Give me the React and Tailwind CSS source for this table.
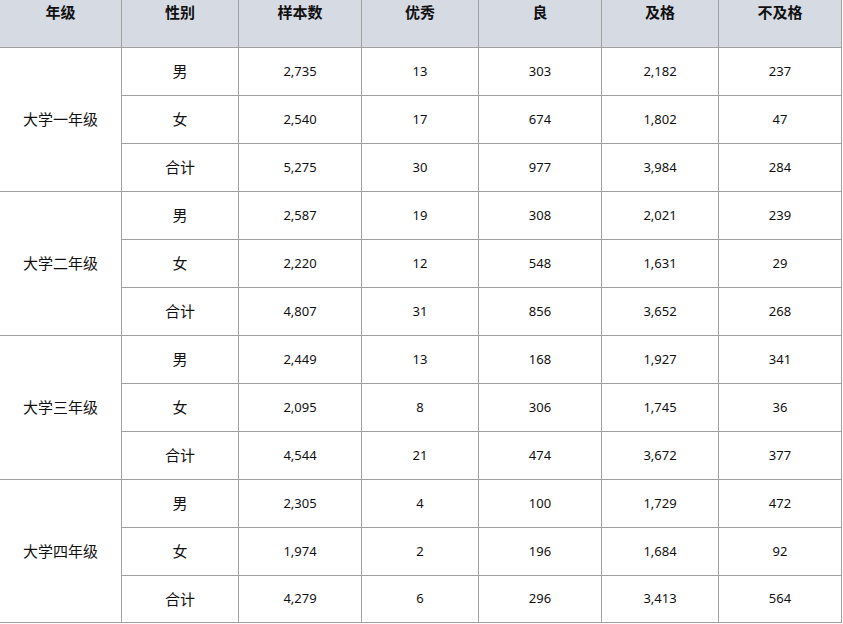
import { Fragment } from 'react';

const grades = [
  {
    name: '大学一年级',
    rows: [
      ['男', '2,735', '13', '303', '2,182', '237'],
      ['女', '2,540', '17', '674', '1,802', '47'],
      ['合计', '5,275', '30', '977', '3,984', '284'],
    ],
  },
  {
    name: '大学二年级',
    rows: [
      ['男', '2,587', '19', '308', '2,021', '239'],
      ['女', '2,220', '12', '548', '1,631', '29'],
      ['合计', '4,807', '31', '856', '3,652', '268'],
    ],
  },
  {
    name: '大学三年级',
    rows: [
      ['男', '2,449', '13', '168', '1,927', '341'],
      ['女', '2,095', '8', '306', '1,745', '36'],
      ['合计', '4,544', '21', '474', '3,672', '377'],
    ],
  },
  {
    name: '大学四年级',
    rows: [
      ['男', '2,305', '4', '100', '1,729', '472'],
      ['女', '1,974', '2', '196', '1,684', '92'],
      ['合计', '4,279', '6', '296', '3,413', '564'],
    ],
  },
];

const headers = ['年级', '性别', '样本数', '优秀', '良', '及格', '不及格'];

const cell = 'flex items-center justify-center border-r border-b border-[#a0a0a0]';

export default function App() {
  return (
    <div
      className="w-[843px] h-[624px] overflow-hidden bg-white text-[#111]"
      style={{ fontFamily: '"Noto Sans", "Noto Sans CJK SC", sans-serif' }}
    >
      <div className="grid w-[842px] grid-cols-[122px_117px_123px_117px_123px_117px_123px] grid-rows-[repeat(12,48px)_47px]">
        {headers.map((h) => (
          <div
            key={h}
            className="flex justify-center items-start pt-[2px] bg-[#d6dae3] border-r border-b border-[#a0a0a0] text-[15px] font-bold leading-[20px]"
          >
            {h}
          </div>
        ))}
        {grades.map((g, gi) => (
          <Fragment key={g.name}>
            <div className={`${cell} row-span-3 text-[15px]`}>{g.name}</div>
            {g.rows.map((r, ri) =>
              r.map((v, ci) => (
                <div
                  key={`${gi}-${ri}-${ci}`}
                  className={`${cell} ${ci === 0 ? 'text-[15px]' : 'text-[13px]'}`}
                >
                  {v}
                </div>
              ))
            )}
          </Fragment>
        ))}
      </div>
    </div>
  );
}
